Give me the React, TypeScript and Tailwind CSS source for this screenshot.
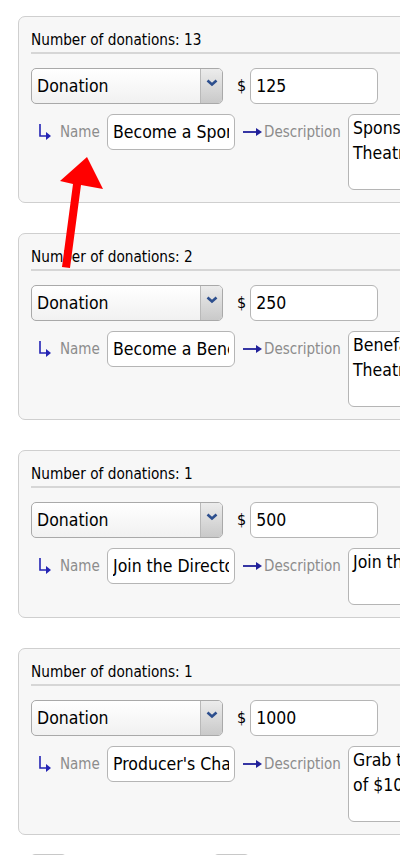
import React from 'react';

type Item = {
  count: number;
  amount: string;
  name: string;
  desc: string;
  tall: boolean;
};

const items: Item[] = [
  { count: 13, amount: '125', name: 'Become a Sponsor', desc: 'Sponsor a show at the\nTheatre this season', tall: true },
  { count: 2, amount: '250', name: 'Become a Benefactor', desc: 'Benefactor of the\nTheatre this season', tall: true },
  { count: 1, amount: '500', name: "Join the Director's Circle", desc: "Join the Director's Circle", tall: false },
  { count: 1, amount: '1000', name: "Producer's Chair", desc: 'Grab the best seats\nof $1000 level', tall: true },
];

const font = { fontFamily: '"DejaVu Sans Condensed", "DejaVu Sans", "Liberation Sans", sans-serif' };

const Chevron = () => (
  <svg width="12" height="8" viewBox="0 0 12 8">
    <path d="M1.5 1.5 L6 5.5 L10.5 1.5" fill="none" stroke="#2d4f8e" strokeWidth="2.6" />
  </svg>
);

const CornerArrow = () => (
  <svg width="14" height="18" viewBox="0 0 14 18">
    <path d="M2 1 V13 H9" fill="none" stroke="#2424b4" strokeWidth="1.6" />
    <path d="M8 9 L13 13 L8 17 Z" fill="#2424b4" />
  </svg>
);

const RightArrow = () => (
  <svg width="20" height="10" viewBox="0 0 20 10">
    <path d="M0 5 H14" stroke="#20209a" strokeWidth="1.8" />
    <path d="M13 1 L19 5 L13 9 Z" fill="#20209a" />
  </svg>
);

const DonationCard = ({ item }: { item: Item }) => (
  <div className="w-[560px] rounded-[7px] border border-[#cfcfcf] bg-[#f7f7f7] px-[12px] pb-[12px] mb-[30px]">
    <div className="pt-[14px] pb-[3px] border-b-2 border-[#d6d6d6] text-[15.2px] leading-[18px] text-black">
      Number of donations: {item.count}
    </div>
    <div className="mt-[14px] flex items-center">
      <div className="shrink-0 flex h-[36px] w-[192px] rounded-[5px] border border-[#a9a9a9] overflow-hidden bg-gradient-to-b from-white to-[#f1f1f1]">
        <div className="flex-1 flex items-center pl-[5px] text-[17.5px] text-black">Donation</div>
        <div className="w-[22px] border-l border-[#b9b9b9] bg-gradient-to-b from-[#ececec] to-[#c9c9c9] flex justify-center pt-[10px]">
          <Chevron />
        </div>
      </div>
      <span className="ml-[14px] text-[16px] text-black">$</span>
      <input
        readOnly
        value={item.amount}
        style={font}
        className="shrink-0 ml-[4px] h-[36px] w-[128px] rounded-[6px] border border-[#b5b5b5] bg-white px-[5px] text-[17.5px] text-black outline-none"
      />
    </div>
    <div className="mt-[10px] flex items-start">
      <div className="shrink-0 h-[36px] flex items-center ml-[7px] w-[14px]">
        <CornerArrow />
      </div>
      <div className="shrink-0 h-[36px] flex items-center ml-[8px] w-[40px] text-[15px] text-[#8c8c8c] whitespace-nowrap">Name</div>
      <input
        readOnly
        value={item.name}
        style={font}
        className="shrink-0 ml-[7px] h-[36px] w-[128px] rounded-[6px] border border-[#b5b5b5] bg-white px-[5px] text-[17.5px] text-black outline-none"
      />
      <div className="shrink-0 h-[36px] flex items-center ml-[8px] w-[20px]">
        <RightArrow />
      </div>
      <div className="shrink-0 h-[36px] flex items-center ml-[1px] w-[78px] text-[15px] text-[#8c8c8c] whitespace-nowrap">Description</div>
      <textarea
        readOnly
        value={item.desc}
        style={font}
        className={`shrink-0 ml-[6px] w-[230px] resize-none overflow-hidden whitespace-pre rounded-[6px] border border-[#b5b5b5] bg-white px-[4px] pt-[1px] text-[17.5px] leading-[25px] text-black outline-none ${item.tall ? 'h-[76px]' : 'h-[57px]'}`}
      />
    </div>
  </div>
);

export default function App() {
  return (
    <div style={font} className="relative w-[400px] h-[855px] overflow-hidden bg-white pt-[16px] pl-[18px]">
      {items.map((item, i) => (
        <DonationCard key={i} item={item} />
      ))}
      <div className="-mt-[11px] flex pl-[12px]">
        <div className="h-[30px] w-[37px] rounded-[5px] border border-[#c8c8c8] bg-[#f5f5f5]" />
        <div className="ml-[146px] h-[30px] w-[37px] rounded-[5px] border border-[#c8c8c8] bg-[#f5f5f5]" />
      </div>
      <svg className="absolute left-0 top-0 pointer-events-none" width="400" height="855" viewBox="0 0 400 855">
        <path d="M62 267 L70 268 L81 185 L103 189 L87 157 L60 181 L73 184 Z" fill="#ff0000" />
      </svg>
    </div>
  );
}
